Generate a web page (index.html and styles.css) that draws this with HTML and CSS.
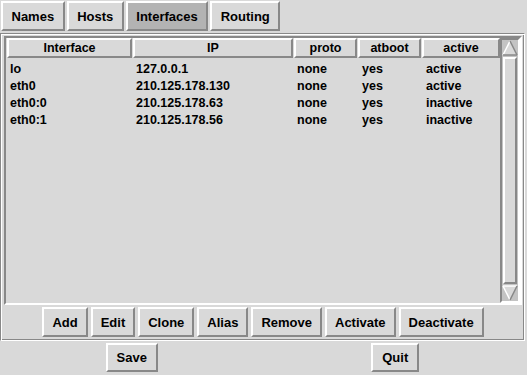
FILE: index.html
```html
<!DOCTYPE html>
<html lang="en">
<head>
  <meta charset="UTF-8" />
  <title>Network Configuration</title>
  <link rel="stylesheet" href="styles.css">
</head>
<body>

  <div class="tabs">
    <button class="btn tab">Names</button>
    <button class="btn tab">Hosts</button>
    <button class="btn tab current">Interfaces</button>
    <button class="btn tab">Routing</button>
  </div>

  <div class="panel">
    <div class="listbox">
      <div class="table">
        <div class="head">
          <div class="th">Interface</div>
          <div class="th">IP</div>
          <div class="th">proto</div>
          <div class="th">atboot</div>
          <div class="th">active</div>
        </div>
        <div class="rows">
          <div class="row"><span>lo</span><span>127.0.0.1</span><span>none</span><span>yes</span><span>active</span></div>
          <div class="row"><span>eth0</span><span>210.125.178.130</span><span>none</span><span>yes</span><span>active</span></div>
          <div class="row"><span>eth0:0</span><span>210.125.178.63</span><span>none</span><span>yes</span><span>inactive</span></div>
          <div class="row"><span>eth0:1</span><span>210.125.178.56</span><span>none</span><span>yes</span><span>inactive</span></div>
        </div>
      </div>
      <div class="scrollbar">
        <svg class="arrow" width="16" height="16" viewBox="0 0 16 16">
          <polygon points="8,1 15,15 1,15" fill="#d9d9d9" />
          <line x1="8" y1="1" x2="1" y2="15" stroke="#fff" stroke-width="1.5" />
          <line x1="8" y1="1" x2="15" y2="15" stroke="#888" stroke-width="1.5" />
          <line x1="1" y1="15" x2="15" y2="15" stroke="#888" stroke-width="1.5" />
        </svg>
        <div class="slider"></div>
        <svg class="arrow" width="16" height="16" viewBox="0 0 16 16">
          <polygon points="1,1 15,1 8,15" fill="#d9d9d9" />
          <line x1="1" y1="1" x2="15" y2="1" stroke="#fff" stroke-width="1.5" />
          <line x1="1" y1="1" x2="8" y2="15" stroke="#fff" stroke-width="1.5" />
          <line x1="15" y1="1" x2="8" y2="15" stroke="#888" stroke-width="1.5" />
        </svg>
      </div>
    </div>

    <div class="actions">
      <button class="btn">Add</button>
      <button class="btn">Edit</button>
      <button class="btn">Clone</button>
      <button class="btn">Alias</button>
      <button class="btn">Remove</button>
      <button class="btn">Activate</button>
      <button class="btn">Deactivate</button>
    </div>
  </div>

  <div class="footer">
    <div><button class="btn small">Save</button></div>
    <div><button class="btn small">Quit</button></div>
  </div>

</body>
</html>
```

FILE: styles.css
```css
body {
  margin: 0;
  background-color: #d9d9d9;
  font: bold 12.5px "Liberation Sans", Arial, sans-serif;
  color: #000;
  width: 527px;
  height: 375px;
  overflow: hidden;
}

.btn {
  font: bold 13px "Liberation Sans", Arial, sans-serif;
  color: #000;
  background-color: #d9d9d9;
  border: 2px solid;
  border-color: #fff #888 #888 #fff;
  height: 30px;
  padding: 0 9px;
  margin: 0;
  cursor: pointer;
}

.tabs {
  display: flex;
  gap: 2px;
  padding: 1px 0 0 1px;
}

.tab {
  padding: 0 8.5px;
}

.tab.current {
  background-color: #b3b3b3;
}

.panel {
  width: 518px;
  margin-top: 2px;
  border: 1px solid;
  border-color: #888 #fff #fff #888;
  box-shadow: inset 1px 1px 0 #fff, inset -1px -1px 0 #888;
  padding: 2px 2px 3px 3px;
}

.listbox {
  display: flex;
  height: 265px;
  border: 2px solid;
  border-color: #888 #fff #fff #888;
}

.table {
  flex: 1;
  padding-left: 1px;
}

.head {
  display: grid;
  grid-template-columns: 125px 160px 63px 63px 78px;
  gap: 1px;
}

.th {
  height: 16px;
  line-height: 16px;
  text-align: center;
  border: 2px solid;
  border-color: #fff #888 #888 #fff;
}

.rows {
  margin-top: 3px;
}

.row {
  display: grid;
  grid-template-columns: 125px 160px 63px 63px 78px;
  gap: 1px;
  line-height: 17px;
}

.row span {
  padding-left: 3px;
}

.row span:nth-child(n+4) {
  padding-left: 4px;
}

.scrollbar {
  width: 16px;
  display: flex;
  flex-direction: column;
  align-items: center;
  gap: 1px;
  background-color: #c3c3c3;
  border: 2px solid;
  border-color: #888 #fff #fff #888;
}

.arrow {
  display: block;
  flex: none;
}

.slider {
  flex: 1;
  width: 10px;
  background-color: #d9d9d9;
  border: 2px solid;
  border-color: #fff #888 #888 #fff;
}

.actions {
  display: flex;
  justify-content: center;
  gap: 3px;
  margin-top: 2px;
}

.actions .btn {
  padding: 0 8px;
}

.footer {
  display: grid;
  grid-template-columns: 1fr 1fr;
  justify-items: center;
  margin-top: 2px;
}

.btn.small {
  height: 29px;
}
```
